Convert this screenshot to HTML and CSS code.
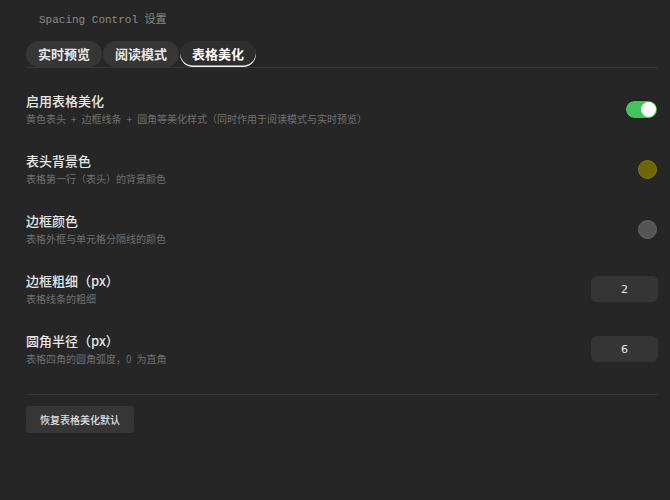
FILE: index.html
```html
<!DOCTYPE html>
<html lang="zh">
<head>
    <meta charset="UTF-8">
    <title>Spacing Control 设置</title>
    <link rel="stylesheet" href="styles.css">
</head>
<body>
    <div class="panel">
        <h2 class="title">Spacing Control 设置</h2>

        <div class="tabs">
            <button class="tab">实时预览</button>
            <button class="tab">阅读模式</button>
            <button class="tab active">表格美化</button>
        </div>

        <div class="settings">
            <div class="row">
                <div class="info">
                    <div class="name">启用表格美化</div>
                    <div class="desc">黄色表头<span class="plus">+</span>边框线条<span class="plus">+</span>圆角等美化样式（同时作用于阅读模式与实时预览）</div>
                </div>
                <label class="toggle on"><span class="knob"></span></label>
            </div>

            <div class="row">
                <div class="info">
                    <div class="name">表头背景色</div>
                    <div class="desc">表格第一行（表头）的背景颜色</div>
                </div>
                <span class="swatch olive"></span>
            </div>

            <div class="row">
                <div class="info">
                    <div class="name">边框颜色</div>
                    <div class="desc">表格外框与单元格分隔线的颜色</div>
                </div>
                <span class="swatch grey"></span>
            </div>

            <div class="row">
                <div class="info">
                    <div class="name">边框粗细（px）</div>
                    <div class="desc">表格线条的粗细</div>
                </div>
                <input class="num" type="text" value="2">
            </div>

            <div class="row">
                <div class="info">
                    <div class="name">圆角半径（px）</div>
                    <div class="desc">表格四角的圆角弧度，0&ensp;为直角</div>
                </div>
                <input class="num" type="text" value="6">
            </div>
        </div>

        <div class="footer">
            <button class="reset">恢复表格美化默认</button>
        </div>
    </div>
</body>
</html>
```

FILE: styles.css
```css
body {
    margin: 0;
    background-color: #262626;
    font-family: "Noto Sans CJK SC", "Noto Sans", sans-serif;
    color: #dcdcdc;
}

.panel {
    padding: 10px 12px 0 26px;
}

.title {
    margin: 0 0 11px 13px;
    font-family: "Liberation Mono", "Noto Sans CJK SC", monospace;
    font-weight: normal;
    font-size: 11px;
    line-height: 20px;
    color: #8a8a8a;
}

.tabs {
    display: flex;
    gap: 1px;
    border-bottom: 1px solid #363636;
}

.tab {
    height: 26px;
    padding: 0 12px;
    border: none;
    border-radius: 13px;
    background-color: #363636;
    color: #e8e8e8;
    font-family: inherit;
    font-size: 13px;
    font-weight: bold;
    line-height: 26px;
}

.tab.active {
    background-color: #2e2e2e;
    color: #ffffff;
    box-shadow: inset 0 -1.5px 0 #f2f2f2;
}

.settings {
    margin-top: 11px;
}

.row {
    height: 60px;
    display: flex;
    align-items: center;
    justify-content: space-between;
}

.info {
    display: flex;
    flex-direction: column;
    gap: 2px;
}

.name {
    font-size: 13px;
    font-weight: 500;
    line-height: 18px;
    color: #e6e6e6;
}

.desc {
    font-size: 10px;
    line-height: 14px;
    color: #6f6f6f;
}

.plus {
    padding: 0 5px;
}

.toggle {
    width: 33px;
    height: 19px;
    box-sizing: border-box;
    border-radius: 10px;
    border: 1px solid #1c1c1c;
    background-color: #44c25e;
    display: flex;
    align-items: center;
    justify-content: flex-end;
    padding: 1px;
}

.knob {
    width: 15px;
    height: 15px;
    border-radius: 50%;
    background-color: #ffffff;
}

.swatch {
    width: 19px;
    height: 19px;
    box-sizing: border-box;
    border-radius: 50%;
    margin-right: 1px;
}

.swatch.olive {
    background-color: #6e6600;
    border: 1px solid #7d7620;
}

.swatch.grey {
    background-color: #555555;
    border: 1px solid #656565;
}

.num {
    width: 67px;
    height: 26px;
    box-sizing: border-box;
    border: none;
    border-radius: 6px;
    background-color: #353535;
    color: #e6e6e6;
    font-family: "DejaVu Sans", sans-serif;
    font-size: 11px;
    text-align: center;
    outline: none;
}

.footer {
    margin-top: 15px;
    padding-top: 10px;
    border-top: 1px solid #363636;
}

.reset {
    height: 27px;
    padding: 0 14px;
    border: none;
    border-radius: 4px;
    background-color: #363636;
    color: #e0e0e0;
    font-family: inherit;
    font-size: 10px;
    font-weight: 500;
}
```
